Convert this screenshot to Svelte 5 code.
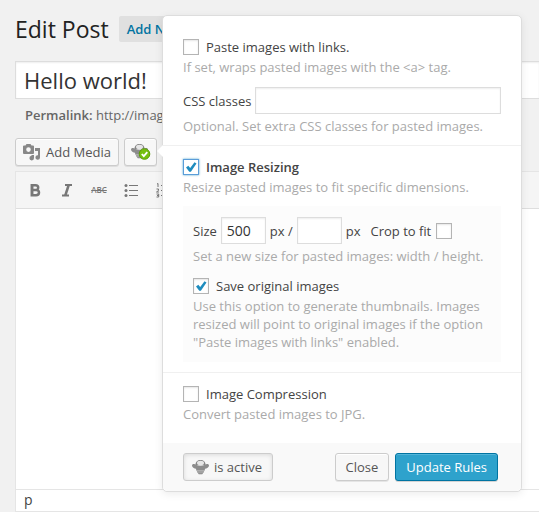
<script>
  let pasteLinks = $state(false);
  let cssClasses = $state('');
  let resizing = $state(true);
  let width = $state('500');
  let height = $state('');
  let crop = $state(false);
  let saveOriginal = $state(true);
  let compression = $state(false);
  let title = $state('Hello world!');
</script>

{#snippet bee()}
  <path d="M3.500 6C3.500 2.500 5.500 1 8.500 1s5 1.500 5 5z" fill="#858585" />
  <ellipse cx="8.500" cy="4" rx="3.500" ry="2.200" fill="#e6e6e6" />
  <path d="M0 6.500C0 4.800 2.500 4.500 4.500 6q4 1.600 8 0C14.500 4.500 17 4.800 17 6.500c0 2-2.200 3.200-4.200 3.200H4.200C2.200 9.700 0 8.500 0 6.500z" fill="#8c8c8c" />
  <path d="M3.800 9h9.400l-.6 2.800H4.400z" fill="#8c8c8c" />
  <path d="M4.600 11.800h7.800l-1.800 3.200H6.400z" fill="#c4c4c4" />
  <path d="M4.800 12.400h7.400l-.6 1.200H5.400zM6 14.200h5l-.8 1H6.800z" fill="#808080" />
{/snippet}

<main class="page">
  <header class="heading">
    <h1>Edit Post</h1>
    <a class="add-new" href="#new">Add New</a>
  </header>

  <input class="title" type="text" aria-label="Title" bind:value={title} />

  <p class="permalink"><strong>Permalink:</strong> http://image</p>

  <div class="media">
    <button class="button" type="button">
      <svg width="18" height="18" viewBox="0 0 18 18" fill="#888" aria-hidden="true">
        <path fill-rule="evenodd" d="M1 2.500h1.500L3.500 1h4l1 1.500H10q1 0 1 1V10q0 1-1 1H1q-1 0-1-1V3.500q0-1 1-1zm4.500 1.800a2.300 2.300 0 1 0 0 4.600 2.300 2.300 0 0 0 0-4.600z" />
        <path d="M12 5h5v9.500a2.300 2.300 0 1 1-2-2.300V8h-3z" />
        <path d="M8.500 12h2.500v3a2.300 2.300 0 1 1-2.500-2.200z" />
      </svg>
      Add Media
    </button>
    <button class="button rules" type="button" aria-label="Paste rules">
      <svg width="20" height="18" viewBox="0 0 20 18" aria-hidden="true">
        {@render bee()}
        <circle cx="13.500" cy="11" r="5.300" fill="#76c010" stroke="#5c9e08" />
        <path d="M10.800 11l2 2.200 3.500-4" fill="none" stroke="#fff" stroke-width="1.800" />
      </svg>
    </button>
  </div>

  <section class="editor">
    <div class="toolbar">
      <button type="button" aria-label="Bold">
        <svg width="16" height="16" viewBox="0 0 16 16" fill="none" stroke="#777" stroke-width="2.500" aria-hidden="true">
          <path d="M5.200 3.200h3.300q2.700 0 2.700 2.400t-2.700 2.400H5.200zM5.200 8h3.800q3 0 3 2.600t-3 2.700H5.200zM4.800 2v12.500" />
        </svg>
      </button>
      <button type="button" aria-label="Italic">
        <svg width="16" height="16" viewBox="0 0 16 16" fill="none" stroke="#777" aria-hidden="true">
          <path d="M6 3h7M3 13.500h7" stroke-width="2" />
          <path d="M9.700 3l-3.400 10.500" stroke-width="2.500" />
        </svg>
      </button>
      <button type="button" class="strike" aria-label="Strikethrough"><s>ABC</s></button>
      <button type="button" aria-label="Bulleted list">
        <svg width="16" height="16" viewBox="0 0 16 16" fill="#777" aria-hidden="true">
          <path d="M6 3h9v1H6zM6 8h9v1H6zM6 13h9v1H6z" />
          <circle cx="3" cy="3.500" r="1.500" /><circle cx="3" cy="8.500" r="1.500" /><circle cx="3" cy="13.500" r="1.500" />
        </svg>
      </button>
      <button type="button" aria-label="Numbered list">
        <svg width="16" height="16" viewBox="0 0 16 16" fill="none" stroke="#777" aria-hidden="true">
          <path d="M6 3.500h9M6 8.500h9M6 13.500h9M2 2l1-.5v3.500M1.500 7h2v1.500l-2 1.500h2.500M1.500 12h2.200v1.500H2h1.700V15H1.500" />
        </svg>
      </button>
    </div>
    <div class="canvas"></div>
    <footer class="path">p</footer>
  </section>

  <form class="popup" onsubmit={(e) => e.preventDefault()}>
    <fieldset>
      <label class="row"><input type="checkbox" bind:checked={pasteLinks} />Paste images with links.</label>
      <p class="hint">If set, wraps pasted images with the &lt;a&gt; tag.</p>
      <label class="row field">CSS classes<input class="text" type="text" bind:value={cssClasses} /></label>
      <p class="hint">Optional. Set extra CSS classes for pasted images.</p>
    </fieldset>

    <fieldset>
      <label class="row strong"><input class="focused" type="checkbox" bind:checked={resizing} />Image Resizing</label>
      <p class="hint">Resize pasted images to fit specific dimensions.</p>
      <div class="nested">
        <div class="row sizes">
          <label for="w">Size</label>
          <input id="w" class="text small" type="text" bind:value={width} />
          <span>px /</span>
          <input class="text small" type="text" aria-label="Height" bind:value={height} />
          <span>px</span>
          <label class="crop">Crop to fit<input type="checkbox" bind:checked={crop} /></label>
        </div>
        <p class="hint">Set a new size for pasted images: width / height.</p>
        <label class="row save"><input type="checkbox" bind:checked={saveOriginal} />Save original images</label>
        <p class="hint">
          Use this option to generate thumbnails. Images resized will point to original images if the option
          "Paste images with links" enabled.
        </p>
      </div>
    </fieldset>

    <fieldset>
      <label class="row"><input type="checkbox" bind:checked={compression} />Image Compression</label>
      <p class="hint">Convert pasted images to JPG.</p>
    </fieldset>

    <div class="actions">
      <button class="button active" type="button">
        <svg width="17" height="16" viewBox="0 0 17 16" aria-hidden="true">{@render bee()}</svg>
        is active
      </button>
      <button class="button close" type="button">Close</button>
      <button class="button primary" type="submit">Update Rules</button>
    </div>
  </form>
</main>

<style>
  :global(body) {
    background: #f1f1f1;
  }
  .page,
  .page * {
    box-sizing: border-box;
  }
  .page {
    position: relative;
    padding: 15px 0 0 15px;
    overflow: hidden;
    color: #444;
    font: 13px/18px 'Open Sans', sans-serif;
  }
  input,
  button {
    margin: 0;
    color: inherit;
    font: inherit;
  }
  p {
    margin: 0;
  }
  .heading {
    display: flex;
    align-items: center;
    gap: 10px;
    height: 28px;
  }
  h1 {
    margin: 0;
    color: #222;
    font-size: 23px;
    font-weight: 400;
    line-height: 28px;
  }
  .add-new {
    padding: 4px 8px;
    border-radius: 2px;
    background: #e0e0e0;
    color: #0074a2;
    font-weight: 600;
    text-decoration: none;
  }
  .title {
    display: block;
    width: 100%;
    height: 38px;
    margin-top: 18px;
    padding: 0 8px;
    border: 1px solid #ddd;
    border-right: 0;
    background: #fff;
    box-shadow: inset 0 1px 2px rgba(0, 0, 0, 0.07);
    color: #333;
    font-size: 22px;
  }
  .permalink {
    margin: 7px 0 14px;
    padding-left: 10px;
    color: #666;
  }
  .permalink strong {
    font-weight: 600;
  }
  .media {
    display: flex;
    gap: 5px;
    margin-bottom: 5px;
  }
  .button {
    display: flex;
    align-items: center;
    gap: 5px;
    height: 28px;
    padding: 0 10px;
    border: 1px solid #ccc;
    border-radius: 3px;
    background: #f7f7f7;
    box-shadow: inset 0 1px 0 #fff, 0 1px 0 rgba(0, 0, 0, 0.08);
    color: #555;
    white-space: nowrap;
  }
  .media .button {
    padding: 0 7px;
  }
  .media .rules {
    padding: 0 5px 0 6px;
  }
  .editor {
    border: 1px solid #e5e5e5;
    border-right: 0;
    background: #fff;
  }
  .toolbar {
    display: flex;
    gap: 2px;
    height: 37px;
    padding: 3px 4px;
    border-bottom: 1px solid #dedede;
    background: #f5f5f5;
  }
  .toolbar button {
    display: grid;
    place-items: center;
    width: 30px;
    height: 30px;
    padding: 0;
    border: 0;
    background: none;
    color: #777;
  }
  .toolbar .strike {
    font-size: 8px;
    font-weight: 600;
  }
  .canvas {
    height: 280px;
  }
  .path {
    height: 22px;
    padding: 1px 8px;
    border-top: 1px solid #e5e5e5;
    font-size: 14px;
  }
  .popup {
    position: absolute;
    top: 15px;
    left: 162px;
    width: 360px;
    border: 1px solid #ddd;
    border-radius: 5px;
    background: #fff;
    box-shadow: 0 2px 8px rgba(0, 0, 0, 0.08);
  }
  .popup::before {
    content: '';
    position: absolute;
    top: 129px;
    left: -6px;
    border: solid transparent;
    border-width: 6px 6px 6px 0;
    border-right-color: #fff;
  }
  fieldset {
    min-width: 0;
    margin: 0;
    padding: 12px 20px 10px;
    border: 0;
    border-bottom: 1px solid #f0f0f0;
  }
  fieldset:first-child {
    padding-top: 22px;
  }
  fieldset:nth-child(3) {
    padding-bottom: 20px;
    border-bottom: 0;
  }
  .row {
    display: flex;
    align-items: center;
    gap: 7px;
    min-height: 18px;
  }
  .strong {
    font-weight: 600;
  }
  .hint {
    margin-top: 2px;
    color: #aaa;
  }
  input[type='checkbox'] {
    flex: none;
    width: 16px;
    height: 16px;
    border: 1px solid #b4b4b4;
    appearance: none;
    background: #fff center / 14px 14px no-repeat;
    box-shadow: inset 0 1px 2px rgba(0, 0, 0, 0.1);
  }
  input[type='checkbox']:checked {
    background-image: url("data:image/svg+xml,%3Csvg xmlns='http://www.w3.org/2000/svg' viewBox='0 0 14 14'%3E%3Cpath d='M2 7.500L4.300 5.800L6.200 8L10.500 2.300L12.500 3.500L6.900 11.800H5.300Z' fill='%231e8cbe'/%3E%3C/svg%3E");
  }
  input.focused {
    border-color: #5b9dd9;
    box-shadow: 0 0 2px rgba(30, 140, 190, 0.8);
  }
  .text {
    flex: 1;
    min-width: 0;
    height: 27px;
    padding: 0 5px;
    border: 1px solid #ddd;
    background: #fff;
    box-shadow: inset 0 1px 2px rgba(0, 0, 0, 0.07);
    color: #333;
    font-size: 14px;
  }
  .small {
    flex: none;
    width: 45px;
  }
  .field {
    gap: 4px;
    margin-top: 11px;
  }
  .field + .hint,
  .sizes + .hint {
    margin-top: 3px;
  }
  .nested {
    margin-top: 10px;
    padding: 11px 10px;
    background: #fcfcfc;
  }
  .sizes {
    gap: 4px;
    white-space: nowrap;
  }
  .crop {
    display: flex;
    align-items: center;
    gap: 5px;
    margin-left: 6px;
  }
  .save {
    margin-top: 12px;
  }
  .actions {
    display: flex;
    gap: 6px;
    padding: 10px 23px 10px 20px;
    border-radius: 0 0 5px 5px;
    background: #f9f9f9;
  }
  .active {
    padding: 0 10px 0 8px;
    box-shadow: inset 0 1px 4px rgba(0, 0, 0, 0.12);
  }
  .close {
    margin-left: auto;
  }
  .primary {
    border-color: #0074a2;
    background: #2ea2cc;
    box-shadow: inset 0 1px 0 rgba(120, 200, 230, 0.5), 0 1px 0 rgba(0, 0, 0, 0.15);
    color: #fff;
  }
</style>
